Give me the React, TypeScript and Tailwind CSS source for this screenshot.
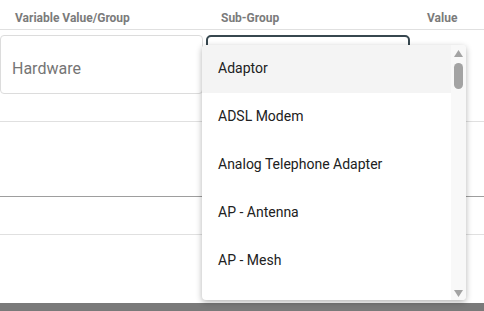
import React from "react";

const items = ["Adaptor", "ADSL Modem", "Analog Telephone Adapter", "AP - Antenna", "AP - Mesh"];

export default function App() {
  return (
    <div className="relative w-[484px] h-[311px] overflow-hidden bg-white" style={{ fontFamily: "Roboto, 'Liberation Sans', sans-serif" }}>
      <div className="flex h-[30px] items-center border-b border-[#e0e0e0] text-[12px] font-bold text-[#7b7b7b]">
        <div className="w-[206px] pl-[15px] pt-[6px]">Variable Value/Group</div>
        <div className="w-[206px] pl-[15px] pt-[6px]">Sub-Group</div>
        <div className="flex-1 pl-[15px] pt-[6px]">Value</div>
      </div>
      <div className="flex h-[92px] items-start gap-[3px] border-b border-[#e0e0e0] pt-[5px]">
        <div className="flex h-[59px] w-[203px] items-center rounded-[4px] border border-[#dcdcdc] pl-[11px] pt-[8px] text-[16px] text-[#757575]">Hardware</div>
        <div className="h-[58px] w-[204px] rounded-[5px] border-2 border-[#37474f]" />
      </div>
      <div className="h-[75px] border-b border-[#9e9e9e]" />
      <div className="h-[38px] border-b border-[#e0e0e0]" />
      <div className="h-[68px]" />
      <div className="h-[8px] bg-[#7a7a7a]" />

      <div className="absolute left-[202px] top-[45px] flex h-[255px] w-[264px] overflow-hidden rounded-[4px] bg-white shadow-[0_2px_6px_rgba(0,0,0,0.3)]">
        <div className="flex-1 overflow-hidden">
          {items.map((t, i) => (
            <div key={t} className={`flex h-[48px] items-center pb-[2px] pl-[16px] text-[14px] text-[#212121] ${i === 0 ? "bg-[#f4f4f4]" : ""}`}>
              {t}
            </div>
          ))}
        </div>
        <div className="relative w-[15px] bg-[#f8f8f8]">
          <svg className="absolute left-[3px] top-[5px]" width="9" height="7" viewBox="0 0 9 7">
            <polygon points="4.5,0 9,7 0,7" fill="#a3a3a3" />
          </svg>
          <div className="absolute left-[3px] top-[18px] h-[26px] w-[9px] rounded-full bg-[#a3a3a3]" />
          <svg className="absolute left-[3px] top-[245px]" width="9" height="7" viewBox="0 0 9 7">
            <polygon points="0,0 9,0 4.5,7" fill="#a3a3a3" />
          </svg>
        </div>
      </div>
    </div>
  );
}
